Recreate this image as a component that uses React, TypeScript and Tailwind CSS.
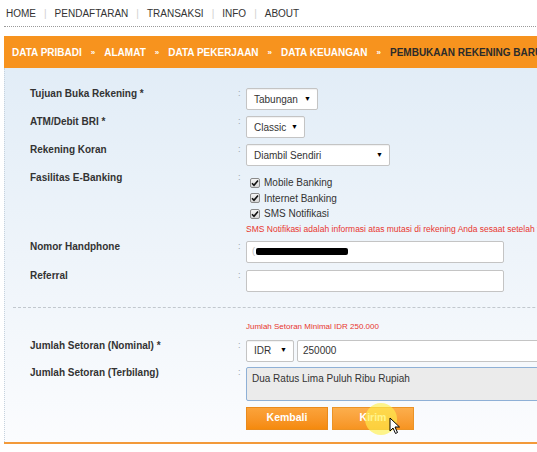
import React from "react"

const navItems = ["HOME", "PENDAFTARAN", "TRANSAKSI", "INFO", "ABOUT"]
const steps = ["DATA PRIBADI", "ALAMAT", "DATA PEKERJAAN", "DATA KEUANGAN"]

function Colon() {
  return <span className="w-[8px] shrink-0 text-[9px] leading-[10px] text-[#9aa4ad]">:</span>
}

function Label({ children }: { children: React.ReactNode }) {
  return (
    <div className="w-[233px] shrink-0 pl-[25px] text-[10px] leading-[12px] font-bold text-[#333]">{children}</div>
  )
}

function FakeSelect({ value, width }: { value: string; width: string }) {
  return (
    <div
      className={`${width} h-[22px] flex items-center justify-between pl-[7px] pr-[6px] bg-white border border-[#c4c4c4] rounded-[2px] text-[10px] text-[#333] shadow-[inset_0_1px_1px_rgba(0,0,0,0.06)]`}
    >
      <span>{value}</span>
      <span className="text-[7px] text-black">▼</span>
    </div>
  )
}

function Check({ label }: { label: string }) {
  return (
    <div className="flex items-center h-[15.5px] gap-[4px] text-[10px] text-[#333]">
      <span className="w-[10px] h-[10px] flex items-center justify-center border border-[#8a8a8a] rounded-[2px] bg-gradient-to-b from-[#f4f4f4] to-[#d8d8d8]">
        <svg width="8" height="8" viewBox="0 0 8 8">
          <path d="M1 4.2 L3 6.2 L7 1.4" fill="none" stroke="#111" strokeWidth="1.6" />
        </svg>
      </span>
      <span>{label}</span>
    </div>
  )
}

export default function App() {
  return (
    <div className="w-[537px] h-[452px] overflow-hidden bg-white font-['Liberation_Sans',Arial,sans-serif]">
      <div className="w-[760px]">
        {/* top menu */}
        <nav className="h-[26px] flex items-center pl-[6px] text-[10px] text-[#333]">
          {navItems.map((item, i) => (
            <React.Fragment key={item}>
              {i > 0 && <span className="px-[8px] text-[#d0d0d0]">|</span>}
              <span>{item}</span>
            </React.Fragment>
          ))}
        </nav>
        <div className="ml-[4px] border-t border-dotted border-[#9a9a9a]" />

        {/* steps */}
        <div className="mt-[9px] ml-[4px] h-[32px] flex items-center pl-[8px] bg-[#f7931e] whitespace-nowrap text-[10px] font-bold">
          {steps.map((s) => (
            <React.Fragment key={s}>
              <span className="text-white">{s}</span>
              <span className="mx-[9px] pt-[1px] text-[8px] text-white">»</span>
            </React.Fragment>
          ))}
          <span className="text-[#2b2b2b]">PEMBUKAAN REKENING BARU</span>
        </div>

        {/* form */}
        <div className="ml-[4px] h-[374px] pt-[20px] border-l border-dotted border-[#c7d3de] bg-gradient-to-b from-[#e2edf7] via-[#eef4fa] to-[#fbfcfe]">
          <div className="flex mb-[6px]">
            <Label>Tujuan Buka Rekening *</Label>
            <Colon />
            <FakeSelect value="Tabungan" width="w-[72px]" />
          </div>
          <div className="flex mb-[6px]">
            <Label>ATM/Debit BRI *</Label>
            <Colon />
            <FakeSelect value="Classic" width="w-[59px]" />
          </div>
          <div className="flex mb-[6px]">
            <Label>Rekening Koran</Label>
            <Colon />
            <FakeSelect value="Diambil Sendiri" width="w-[144px]" />
          </div>
          <div className="flex">
            <Label>Fasilitas E-Banking</Label>
            <Colon />
            <div className="pt-[3px] pl-[4px]">
              <Check label="Mobile Banking" />
              <Check label="Internet Banking" />
              <Check label="SMS Notifikasi" />
            </div>
          </div>
          <div className="pl-[241px] mt-[2px] text-[8.5px] leading-[11px] text-[#e8362f] whitespace-nowrap">
            SMS Notifikasi adalah informasi atas mutasi di rekening Anda sesaat setelah transaksi
          </div>

          <div className="flex mt-[6px] mb-[7px]">
            <Label>Nomor Handphone</Label>
            <Colon />
            <div className="w-[258px] h-[22px] flex items-center pl-[5px] bg-white border border-[#c4c4c4] rounded-[2px]">
              <span className="text-[9px] text-[#bbb]">(</span>
              <span className="ml-[1px] w-[92px] h-[7px] rounded-[2px] bg-black" />
            </div>
          </div>
          <div className="flex">
            <Label>Referral</Label>
            <Colon />
            <div className="w-[258px] h-[22px] bg-white border border-[#c4c4c4] rounded-[2px]" />
          </div>

          <div className="mt-[15px] ml-[8px] border-t border-dashed border-[#c2c8ce]" />

          <div className="pl-[241px] mt-[14px] text-[8px] leading-[10px] text-[#e8362f]">
            Jumlah Setoran Minimal IDR 250.000
          </div>
          <div className="flex mt-[8px] mb-[5px]">
            <Label>Jumlah Setoran (Nominal) *</Label>
            <Colon />
            <FakeSelect value="IDR" width="w-[48px]" />
            <div className="ml-[3px] w-[300px] h-[22px] flex items-center pl-[5px] bg-white border border-[#c4c4c4] rounded-[2px] text-[10px] text-[#333]">
              250000
            </div>
          </div>
          <div className="flex">
            <Label>Jumlah Setoran (Terbilang)</Label>
            <Colon />
            <div className="w-[351px] h-[34px] pl-[5px] pt-[5px] bg-[#ebebeb] border border-[#8eb0d6] rounded-[2px] text-[10px] leading-[12px] text-[#333]">
              Dua Ratus Lima Puluh Ribu Rupiah
            </div>
          </div>

          <div className="flex gap-[4px] mt-[6px] pl-[241px]">
            <button className="w-[82px] h-[23px] border border-[#e98a1c] bg-gradient-to-b from-[#fba33a] to-[#f58a0b] text-white text-[10.5px] font-bold">
              Kembali
            </button>
            <button className="relative w-[82px] h-[23px] border border-[#eb9326] bg-gradient-to-b from-[#fcae4c] to-[#f79420] text-white text-[10.5px] font-bold">
              Kirim
              <span className="absolute left-[32px] top-[-5px] w-[32px] h-[32px] rounded-full bg-[#fff04d]/65" />
              <svg className="absolute left-[56px] top-[9px]" width="12" height="18" viewBox="0 0 12 18">
                <path d="M1 1 L1 14 L4 11 L6.5 16.5 L8.5 15.5 L6 10 L10.5 10 Z" fill="white" stroke="black" strokeWidth="1" strokeLinejoin="round" />
              </svg>
            </button>
          </div>
        </div>
        <div className="ml-[4px] h-[2px] bg-[#f39a3a]" />
      </div>
    </div>
  )
}
